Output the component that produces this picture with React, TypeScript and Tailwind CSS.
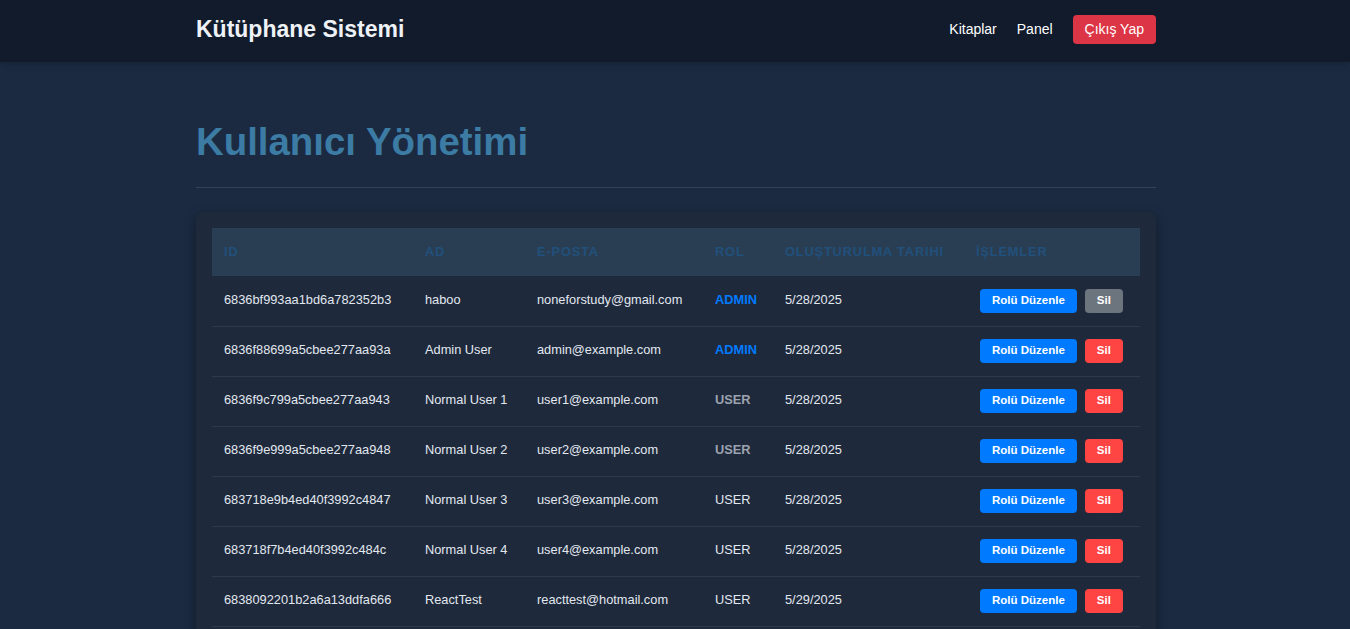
import React from 'react';

interface UserRow {
  id: string;
  name: string;
  email: string;
  role: 'ADMIN' | 'USER';
  created: string;
  strong?: boolean;
  self?: boolean;
}

const users: UserRow[] = [
  { id: '6836bf993aa1bd6a782352b3', name: 'haboo', email: 'noneforstudy@gmail.com', role: 'ADMIN', created: '5/28/2025', strong: true, self: true },
  { id: '6836f88699a5cbee277aa93a', name: 'Admin User', email: 'admin@example.com', role: 'ADMIN', created: '5/28/2025', strong: true },
  { id: '6836f9c799a5cbee277aa943', name: 'Normal User 1', email: 'user1@example.com', role: 'USER', created: '5/28/2025', strong: true },
  { id: '6836f9e999a5cbee277aa948', name: 'Normal User 2', email: 'user2@example.com', role: 'USER', created: '5/28/2025', strong: true },
  { id: '683718e9b4ed40f3992c4847', name: 'Normal User 3', email: 'user3@example.com', role: 'USER', created: '5/28/2025' },
  { id: '683718f7b4ed40f3992c484c', name: 'Normal User 4', email: 'user4@example.com', role: 'USER', created: '5/28/2025' },
  { id: '6838092201b2a6a13ddfa666', name: 'ReactTest', email: 'reacttest@hotmail.com', role: 'USER', created: '5/29/2025' },
];

const headers = ['ID', 'AD', 'E-POSTA', 'ROL', 'OLUŞTURULMA TARIHI', 'İŞLEMLER'];
const colWidths = ['w-[201px]', 'w-[112px]', 'w-[178px]', 'w-[70px]', 'w-[191px]', 'w-[176px]'];

const roleClass = (u: UserRow) => {
  if (u.role === 'ADMIN') return 'font-bold text-[#007bff]';
  if (u.strong) return 'font-bold text-[#9ca3af]';
  return 'text-[#e2e8f0]';
};

export default function App() {
  return (
    <div className="min-h-screen bg-[#1b2a41] font-['Liberation_Sans',Arial,sans-serif] text-[#e2e8f0]">
      <nav className="h-[62px] bg-[#111b2c] pb-[3px] shadow-md">
        <div className="mx-auto flex h-full w-[960px] translate-x-[1px] items-center justify-between">
          <h1 className="text-[23px] font-bold text-[#eef2f7]">Kütüphane Sistemi</h1>
          <div className="flex items-center text-[14px] text-white">
            <a className="mr-[20px]">Kitaplar</a>
            <a className="mr-[20px]">Panel</a>
            <button className="h-[29px] rounded-[4px] bg-[#dc3545] px-[12px] text-[14px] text-white">
              Çıkış Yap
            </button>
          </div>
        </div>
      </nav>

      <main className="mx-auto w-[960px] translate-x-[1px] pt-[57px]">
        <h2 className="border-b border-[#334155] pb-[22px] text-[38.4px] font-bold leading-[46px] text-[#3b7ba4]">
          Kullanıcı Yönetimi
        </h2>

        <div className="mt-[24px] rounded-[8px] bg-[#1e293b] p-[16px] shadow-[0_4px_12px_rgba(0,0,0,0.35)]">
          <table className="w-full table-fixed border-collapse text-left text-[12.8px]">
            <thead>
              <tr className="h-[48px] bg-[#2a3e53]">
                {headers.map((h, i) => (
                  <th
                    key={h}
                    className={`${colWidths[i]} px-[12px] font-bold tracking-[0.85px] text-[#21507c]`}
                  >
                    {h}
                  </th>
                ))}
              </tr>
            </thead>
            <tbody>
              {users.map((u) => (
                <tr key={u.id} className="h-[50px] border-b border-[#2c3a4d]">
                  <td className="px-[12px] pb-[2px]">{u.id}</td>
                  <td className="px-[12px] pb-[2px]">{u.name}</td>
                  <td className="px-[12px] pb-[2px]">{u.email}</td>
                  <td className={`px-[12px] pb-[2px] ${roleClass(u)}`}>{u.role}</td>
                  <td className="px-[12px] pb-[2px]">{u.created}</td>
                  <td className="px-[12px]">
                    <div className="flex items-center">
                      <button className="mx-[4px] h-[24px] rounded-[4px] bg-[#007bff] px-[12px] text-[11.5px] font-bold text-white">
                        Rolü Düzenle
                      </button>
                      <button
                        className={`mx-[4px] h-[24px] rounded-[4px] px-[12px] text-[11.5px] font-bold text-white ${
                          u.self ? 'bg-[#6c757d]' : 'bg-[#ff4444]'
                        }`}
                      >
                        Sil
                      </button>
                    </div>
                  </td>
                </tr>
              ))}
            </tbody>
          </table>
        </div>
      </main>
    </div>
  );
}
